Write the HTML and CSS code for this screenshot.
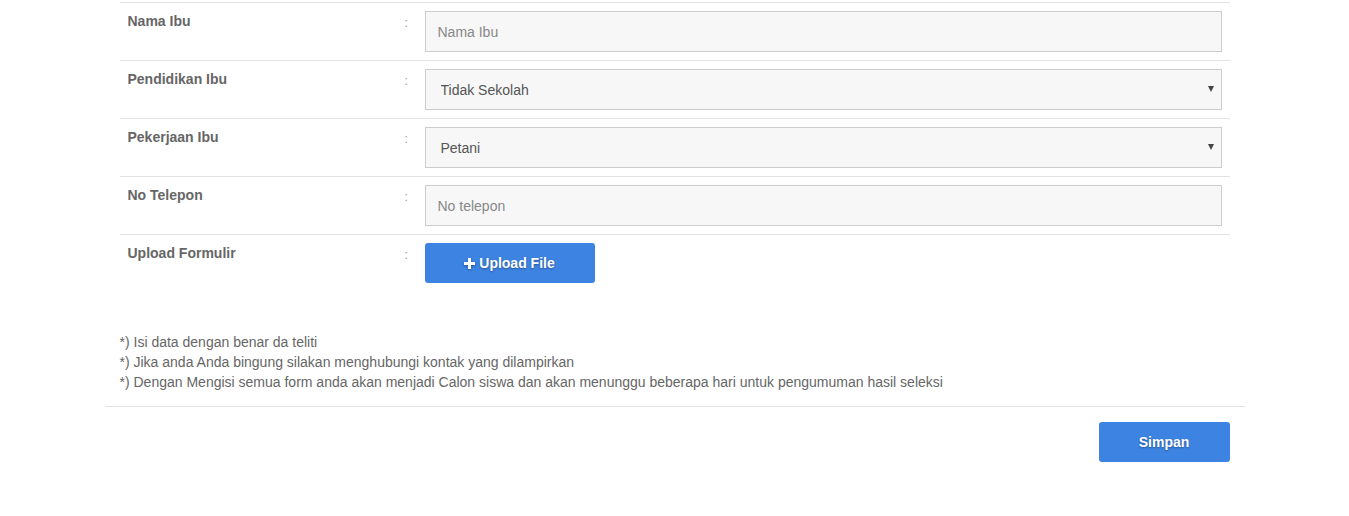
FILE: index.html
```html
<!DOCTYPE html>
<html>
<head>
<meta charset="utf-8">
<link rel="stylesheet" href="styles.css">
</head>
<body>
<div class="container">
  <div class="form">
    <div class="row">
      <div class="label">Nama Ibu</div>
      <div class="colon">:</div>
      <div class="field"><input class="input" type="text" placeholder="Nama Ibu"></div>
    </div>
    <div class="row">
      <div class="label">Pendidikan Ibu</div>
      <div class="colon">:</div>
      <div class="field"><div class="select-wrap"><select class="select"><option>Tidak Sekolah</option></select></div></div>
    </div>
    <div class="row">
      <div class="label">Pekerjaan Ibu</div>
      <div class="colon">:</div>
      <div class="field"><div class="select-wrap"><select class="select"><option>Petani</option></select></div></div>
    </div>
    <div class="row">
      <div class="label">No Telepon</div>
      <div class="colon">:</div>
      <div class="field"><input class="input" type="text" placeholder="No telepon"></div>
    </div>
    <div class="row">
      <div class="label">Upload Formulir</div>
      <div class="colon">:</div>
      <div class="field"><button class="btn btn-upload"><svg class="plus" width="11" height="11" viewBox="0 0 11 11"><path d="M4 0h3v4h4v3H7v4H4V7H0V4h4z" fill="#fff"/></svg>Upload File</button></div>
    </div>
  </div>
  <div class="notes">
    <div>*) Isi data dengan benar da teliti</div>
    <div>*) Jika anda Anda bingung silakan menghubungi kontak yang dilampirkan</div>
    <div>*) Dengan Mengisi semua form anda akan menjadi Calon siswa dan akan menunggu beberapa hari untuk pengumuman hasil seleksi</div>
  </div>
  <div class="footer">
    <button class="btn btn-save">Simpan</button>
  </div>
</div>
</body>
</html>
```
FILE: styles.css
```css
* { box-sizing: border-box; }
body {
  margin: 0;
  background: #fff;
  font-family: "Liberation Sans", Arial, sans-serif;
  font-size: 14px;
  line-height: 20px;
  color: #666;
}
.container {
  width: 1140px;
  margin: 2px auto 0;
}
.form {
  padding: 0 15px;
}
.row {
  display: grid;
  grid-template-columns: 277px 20px 1fr;
  border-top: 1px solid #e2e2e2;
  height: 58px;
}
.label {
  padding: 8px;
  font-weight: bold;
  color: #666;
}
.colon {
  padding: 10px 0 0 8px;
  font-size: 12px;
  color: #999;
}
.field {
  padding: 8px;
}
.input, .select {
  display: block;
  width: 100%;
  height: 41px;
  border: 1px solid #ccc;
  background: #f7f7f7;
  font-family: "Liberation Sans", Arial, sans-serif;
  font-size: 14px;
  color: #555;
  outline: none;
  border-radius: 0;
}
.input {
  padding: 0 12px;
}
.input::placeholder { color: #888; }
.select-wrap { position: relative; }
.select {
  appearance: none;
  -webkit-appearance: none;
  padding: 0 15px;
  color: #555;
}
.select-wrap::after {
  content: "";
  position: absolute;
  right: 8px;
  top: 17px;
  border-left: 3px solid transparent;
  border-right: 3px solid transparent;
  border-top: 6px solid #444;
}
.btn {
  border: none;
  border-radius: 3px;
  background: #3c83e2;
  color: #fff;
  font-family: "Liberation Sans", Arial, sans-serif;
  font-size: 14px;
  font-weight: bold;
  height: 40px;
  text-shadow: 0 1px 2px rgba(0,0,0,0.35);
  display: flex;
  align-items: center;
  justify-content: center;
  cursor: pointer;
}
.btn-upload {
  width: 170px;
}
.plus {
  margin-right: 4px;
  filter: drop-shadow(0 1px 1px rgba(0,0,0,0.35));
}
.notes {
  padding: 40px 15px 14px;
  color: #666;
}
.footer {
  border-top: 1px solid #e2e2e2;
  padding: 15px 15px;
  display: flex;
  justify-content: flex-end;
}
.btn-save {
  width: 131px;
}
```
